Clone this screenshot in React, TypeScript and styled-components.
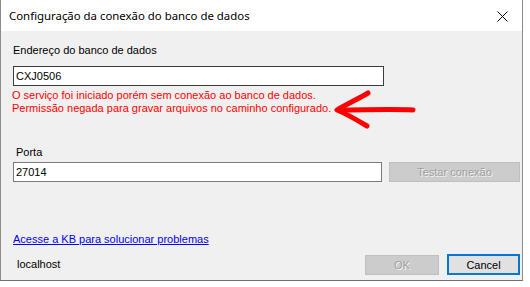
import styled, { createGlobalStyle } from 'styled-components';

const GlobalStyle = createGlobalStyle`
  html, body {
    margin: 0;
    padding: 0;
    background: #ffffff;
  }
  body {
    font-family: "Liberation Sans", Arial, sans-serif;
    font-size: 11px;
  }
`;

function App() {
  return (
    <>
      <GlobalStyle />
      <Window>
        <TitleBar>
          <Title>Configuração da conexão do banco de dados</Title>
          <CloseButton aria-label='Fechar'>
            <svg width='11' height='11' viewBox='0 0 11 11'>
              <path d='M0.5 0.5 L10.5 10.5 M10.5 0.5 L0.5 10.5' stroke='#000' strokeWidth='1' fill='none' />
            </svg>
          </CloseButton>
        </TitleBar>
        <Body>
          <Label $left={12}>Endereço do banco de dados</Label>
          <TextBox $width={371} $border='#3c3c3c' $top={9} defaultValue='CXJ0506' />
          <ErrorText>
            <div>O serviço foi iniciado porém sem conexão ao banco de dados.</div>
            <div>Permissão negada para gravar arquivos no caminho configurado.</div>
          </ErrorText>
          <Label $left={15} $top={31}>Porta</Label>
          <Row $top={3}>
            <TextBox $width={369} $border='#7a7a7a' defaultValue='27014' />
            <Button $width={131} disabled>Testar conexão</Button>
          </Row>
          <Link href='#'>Acesse a KB para solucionar problemas</Link>
          <Footer>
            <Host>localhost</Host>
            <Actions>
              <Button $width={74} disabled>OK</Button>
              <Button $width={73} $primary>Cancel</Button>
            </Actions>
          </Footer>
          <Arrow width='84' height='42' viewBox='0 0 84 42'>
            <path d='M80 22 C 60 21, 30 22, 7 22' stroke='#ff0000' strokeWidth='5' strokeLinecap='round' fill='none' />
            <path d='M35 5 C 25 11, 12 17, 4 22 C 14 26, 24 32, 34 38' stroke='#ff0000' strokeWidth='5' strokeLinecap='round' strokeLinejoin='round' fill='none' />
          </Arrow>
        </Body>
      </Window>
    </>
  );
}

export default App;

const Window = styled.div`
  position: relative;
  box-sizing: border-box;
  width: 523px;
  height: 281px;
  display: flex;
  flex-direction: column;
  border-left: 1px solid #8c8c8c;
  border-right: 1px solid #8c8c8c;
  border-bottom: 1px solid #707070;
  background: #f0f0f0;
`;

const TitleBar = styled.div`
  height: 31px;
  flex: none;
  display: flex;
  align-items: center;
  justify-content: space-between;
  background: #ffffff;
  padding: 0 14px 0 8px;
`;

const Title = styled.div`
  font-family: "Noto Sans", "Open Sans", sans-serif;
  font-size: 11.4px;
  color: #000;
  margin-top: -1px;
`;

const CloseButton = styled.div`
  display: flex;
  width: 11px;
  height: 11px;
  margin-top: 1px;
`;

const Body = styled.div`
  flex: 1;
  display: flex;
  flex-direction: column;
  padding: 0 0 0 12px;
`;

const Label = styled.div<{ $left?: number; $top?: number }>`
  margin-left: ${(p) => (p.$left ?? 12) - 12}px;
  margin-top: ${(p) => p.$top ?? 13}px;
  line-height: 13px;
  color: #000;
`;

const TextBox = styled.input<{ $width: number; $border: string; $top?: number }>`
  box-sizing: border-box;
  width: ${(p) => p.$width}px;
  height: 20px;
  margin: ${(p) => p.$top ?? 0}px 0 0 0;
  padding: 0 2px;
  border: 1px solid ${(p) => p.$border};
  background: #fff;
  font-family: "Liberation Sans", Arial, sans-serif;
  font-size: 11px;
  color: #000;
  outline: none;
`;

const ErrorText = styled.div`
  margin-top: 3px;
  margin-left: -1px;
  line-height: 13px;
  color: #ff0000;
`;

const Row = styled.div<{ $top?: number }>`
  display: flex;
  align-items: center;
  gap: 7px;
  margin-top: ${(p) => p.$top ?? 0}px;
`;

const Button = styled.button<{ $width: number; $primary?: boolean }>`
  box-sizing: border-box;
  width: ${(p) => p.$width}px;
  height: ${(p) => (p.$primary ? 21 : 20)}px;
  padding: 0;
  font-family: "Liberation Sans", Arial, sans-serif;
  font-size: 11px;
  background: ${(p) => (p.$primary ? '#e1e1e1' : '#cccccc')};
  border: ${(p) => (p.$primary ? '2px solid #0078d7' : '1px solid #bfbfbf')};
  color: #000;
  &:disabled {
    color: #a0a0a0;
    text-shadow: 1px 1px 0 #f4f4f4;
  }
`;

const Link = styled.a`
  margin-top: 51px;
  line-height: 13px;
  color: #0000ff;
  text-decoration: underline;
  align-self: flex-start;
`;

const Footer = styled.div`
  display: flex;
  align-items: center;
  justify-content: space-between;
  margin-top: 8px;
  padding-right: 2px;
`;

const Host = styled.div`
  margin-left: 4px;
  line-height: 13px;
  color: #000;
`;

const Actions = styled.div`
  display: flex;
  align-items: center;
  gap: 8px;
`;

const Arrow = styled.svg`
  position: absolute;
  left: 332px;
  top: 88px;
`;
